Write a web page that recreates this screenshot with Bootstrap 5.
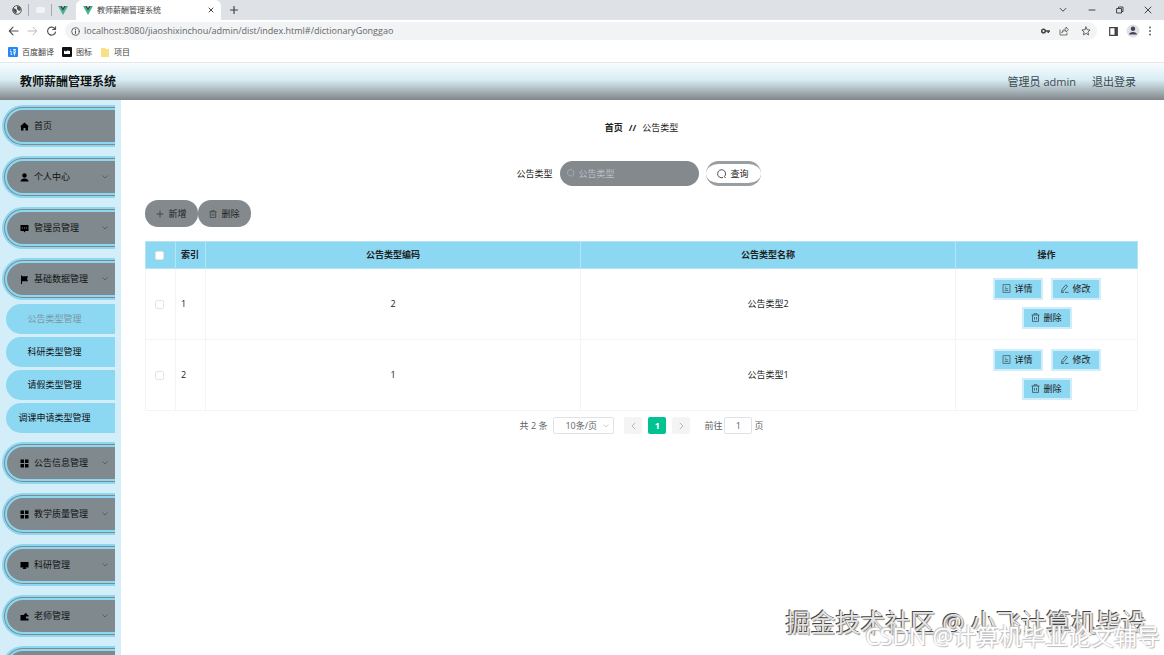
<!DOCTYPE html>
<html lang="zh-CN">
<head>
<meta charset="utf-8">
<meta name="viewport" content="width=device-width, initial-scale=1">
<title>教师薪酬管理系统</title>
<link href="https://cdn.jsdelivr.net/npm/bootstrap@5.3.0/dist/css/bootstrap.min.css" rel="stylesheet">
<style>
:root{--sky:#8cd7f2;--pale:#d4eef9;--steel:#84898d;--ui:"Open Sans","Noto Sans CJK SC",sans-serif}
body{font-family:var(--ui);font-size:9px;line-height:12px;color:#222;height:100vh;overflow:hidden;background:#fff}
button,input,select{font-family:inherit;font-size:inherit;line-height:12px;color:inherit}
svg{display:block;flex:none}
a{color:inherit;text-decoration:none}
.line-icon{fill:none;stroke:currentColor;stroke-linecap:round;stroke-linejoin:round}
.plain-btn{border:0;background:none;padding:0}

.tabstrip{height:20px;background:#dee1e6;color:#444}
.tab-group{width:76px;padding:0 8px 0 12px}
.tab-sep{width:1px;height:12px;background:#a5a9ae}
.active-tab{width:145px;height:20px;background:#fff;border-radius:6px 6px 0 0;padding:0 7px;font-size:8px}
.toolbar{height:22px;color:#555}
.omnibox{height:18px;border-radius:9px;background:#f1f3f4;padding:0 6px}
.omnibox input{border:0;background:none;padding:0;color:#666;outline:0;min-width:0}
.bookmarks{height:21px;border-bottom:1px solid #e4e6ea;font-size:8px;color:#444}

.app-header{height:37px;background:linear-gradient(#f8fdff 0%,#d8edf4 45%,#a9b6bb 75%,#808588 100%);padding:0 28px 0 20px}
.app-title{font-size:12px;line-height:16px;font-weight:700;color:#111}
.app-user{font-size:11px;line-height:16px;color:#3c4a50}

.sidebar{width:121px;background:var(--pale);padding:5px 6px 0 2px;flex:none;overflow:hidden}
.menu-list{gap:9px}
.menu-btn{height:42px;width:100%;background:#7f898e;border:5px double var(--sky);border-right:0;border-radius:21px 0 0 21px;padding:0 6px 0 13px;text-align:left;color:#111;gap:5px}
.menu-btn .ms-auto{color:#50565a}
.sub-list{margin:4px 0 0 4px;gap:3px}
.sub-btn{height:30px;background:var(--sky);border-radius:15px 0 0 15px;color:#111;padding-right:12px}
.sub-btn.current{color:#7a979f}

.content{padding:20px 26px 0 24px;min-width:0}
.crumbs{height:16px;gap:6px}
.search-row{margin-top:25px;gap:7px;padding-right:6px}
.search-box input{width:139px;height:25px;border:0;border-radius:13px;background:var(--steel);padding:0 12px 0 19px;color:#fff}
.search-box input::placeholder{color:#b7bfc5;opacity:1}
.search-box svg{position:absolute;left:7px;top:8px;color:#b7bfc5}
.query-btn{width:55px;height:25px;border-radius:13px;background:#fff;border:solid #999ea1;border-width:3px 0;gap:3px}
.tool-row{margin-top:14px}
.pill-btn{width:53px;height:27px;border:0;border-radius:13px;background:var(--steel);gap:4px;color:#222}
.pill-btn svg,.op-btn svg{opacity:.75}
.data-table{margin:14px 0 0;table-layout:fixed;width:100%;border-collapse:collapse;text-align:center}
.data-table th{background:var(--sky);height:27px;border:1px solid #b5e4f5;padding:0;font-weight:700;color:#222}
.data-table td{height:71px;border:1px solid #f3f4f6;padding:0}
.data-table th:nth-child(2),.data-table td:nth-child(2){text-align:left;padding-left:5px}
.col-narrow{width:30px}
.col-ops{width:182px}
.data-table .form-check-input{width:9px;height:9px;margin:0 2px 0 0;float:none;vertical-align:middle;border-color:#e3e5ea;border-radius:2px;background-color:#fff}
.ops{gap:7px 8px;padding:0 30px 2px}
.op-btn{width:50px;height:22px;background:var(--sky);border:2px solid #cfeefa;gap:3px;color:#222}
.pager{margin-top:6px;color:#606266;gap:6px}
.pager select{appearance:none;width:61px;height:17px;border:1px solid #dfe2e8;border-radius:2px;background:#fff;padding:0 12px 0 11px;color:#606266;line-height:12px}
.select-wrap svg{position:absolute;right:4px;top:6px;color:#c0c4cc}
.page-btn{width:18px;height:17px;border:0;background:#f4f4f5;border-radius:2px;color:#b5b9c0}
.page-btn.current{background:#00c292;color:#fff;font-weight:700}
.pager input{width:28px;height:17px;border:1px solid #dfe2e8;border-radius:2px;text-align:center;padding:0;margin:0 2px;color:#606266}

.marks{position:absolute;right:4px;bottom:6px;white-space:nowrap;text-align:right;pointer-events:none}
.mark-front{font-size:25px;line-height:30px;color:#e4e4e4;text-shadow:-1px -1px 0 #444,1px 1px 1px #888;padding-right:14px}
.mark-back{font-size:23px;line-height:26px;color:#fff;text-shadow:-1px -1px 1px #c4c4c4,1px 1px 1px #bbb;margin-top:-14px}
</style>
</head>
<body class="d-flex flex-column position-relative">
<svg width="0" height="0" class="position-absolute" aria-hidden="true">
  <symbol id="vue" viewBox="0 0 10 9"><path fill="#41b883" d="M0 0h2l3 5 3-5h2L5 9z"/><path fill="#35495e" d="M2 0h2l1 2 1-2h2L5 5z"/></symbol>
  <symbol id="down" viewBox="0 0 8 6"><path d="M1.500 1.500 4 4l2.500-2.500" fill="none" stroke="currentColor" stroke-width=".8"/></symbol>
  <symbol id="lens" viewBox="0 0 10 10"><path d="M7.300 7.700A4 4 0 1 0 6 8.500M7.300 7.700 8.600 9" fill="none" stroke="currentColor" stroke-width=".8"/></symbol>
  <symbol id="trash" viewBox="0 0 9 9"><path d="M.5 2h8M3 2V.7h3V2M1.500 2v6.400h6V2M3.500 4v2.500M5.500 4v2.500" fill="none" stroke="currentColor" stroke-width=".8"/></symbol>
  <symbol id="doc" viewBox="0 0 9 9"><path d="M1 .6h7v7.800H1zM2.800 3h1.500M2.800 4.800h3.400M2.800 6.500h3.400" fill="none" stroke="currentColor" stroke-width=".7"/></symbol>
  <symbol id="pen" viewBox="0 0 9 9"><path d="M1.500 7.500 2 5.400 5.800.8 7.500 2.200 3.700 6.800zM1 8.400h3M5 8.400h3.500" fill="none" stroke="currentColor" stroke-width=".8"/></symbol>
  <symbol id="grid" viewBox="0 0 9 9"><path d="M.5.5h3.500V4H.5zM5 .5h3.500V4H5zM.5 5h3.500v3.500H.5zM5 5h3.500v3.500H5z"/></symbol>
</svg>

<div class="tabstrip d-flex align-items-center flex-shrink-0">
  <div class="tab-group d-flex align-items-center justify-content-between">
    <svg width="10" height="10" viewBox="0 0 10 10"><circle cx="5" cy="5" r="4.300" fill="#eee" stroke="#555"/><path fill="#555" d="M1 3l3 1 1 2-1 3-3-3zM5 1l3 1 1 3-2 1-2-2z"/></svg>
    <span class="tab-sep"></span><svg width="9" height="7"><rect width="9" height="6" rx="2" fill="#f3f4f6"/></svg><span class="tab-sep"></span>
    <svg width="10" height="9"><use href="#vue"/></svg>
  </div>
  <div class="active-tab d-flex align-items-center">
    <svg width="10" height="9"><use href="#vue"/></svg><span class="ms-1">教师薪酬管理系统</span>
    <button class="plain-btn ms-auto" aria-label="关闭标签页"><svg class="line-icon" width="6" height="6" viewBox="0 0 6 6"><path d="M1 1l4 4M5 1 1 5"/></svg></button>
  </div>
  <button class="plain-btn ms-2" aria-label="新标签页"><svg class="line-icon" width="10" height="8" viewBox="0 0 10 8"><path d="M5 .5v7M1.500 4h7" stroke-width="1.200"/></svg></button>
  <div class="d-flex align-items-center ms-auto pe-2 me-1 gap-3">
    <button class="plain-btn me-1" aria-label="搜索标签页"><svg width="10" height="8"><use href="#down"/></svg></button>
    <button class="plain-btn" aria-label="最小化"><svg class="line-icon" width="8" height="8" viewBox="0 0 8 8"><path d="M1 4h6"/></svg></button>
    <button class="plain-btn mx-1" aria-label="还原"><svg class="line-icon" width="8" height="8" viewBox="0 0 8 8"><path d="M1 2.500h4.500V7H1zM2.500 2V1H7v4.500H6"/></svg></button>
    <button class="plain-btn" aria-label="关闭"><svg class="line-icon" width="8" height="8" viewBox="0 0 8 8"><path d="M1 1l6 6M7 1 1 7"/></svg></button>
  </div>
</div>

<div class="toolbar d-flex align-items-center flex-shrink-0 ps-2 pe-2">
  <button class="plain-btn" aria-label="后退"><svg class="line-icon" width="11" height="10" viewBox="0 0 11 10"><path d="M10 5H1.500M5 1.200 1.300 5 5 8.800" stroke-width="1.200"/></svg></button>
  <button class="plain-btn ms-2" aria-label="前进"><svg class="line-icon" width="11" height="10" viewBox="0 0 11 10"><path d="M1 5h8.500M6 1.200 9.700 5 6 8.800" stroke="#bbb"/></svg></button>
  <button class="plain-btn ms-2" aria-label="刷新"><svg class="line-icon" width="11" height="10" viewBox="0 0 11 10"><path d="M9 3A4 4 0 1 0 9.500 6M9.500.8v2.700H6.700" stroke-width="1.200"/></svg></button>
  <div class="omnibox d-flex align-items-center flex-grow-1 ms-2 me-1">
    <svg class="line-icon" width="9" height="9" viewBox="0 0 9 9"><circle cx="4.500" cy="4.500" r="3.800" stroke-width=".9"/><path d="M4.500 4v2.500M4.500 2.400v.2"/></svg>
    <input class="flex-grow-1 ms-1" type="text" aria-label="地址" value="localhost:8080/jiaoshixinchou/admin/dist/index.html#/dictionaryGonggao">
    <div class="d-flex gap-2">
      <svg width="11" height="10" viewBox="0 0 11 10"><circle cx="3.500" cy="5" r="1.800" fill="none" stroke="#444" stroke-width="1.500"/><path d="M5 4.300h5v1.500H9V7H7.500V5.800H5z" fill="#444"/></svg>
      <svg class="line-icon" width="10" height="10" viewBox="0 0 10 10"><path d="M1 4v5h7V7M3 6.500C3.500 4 5 3 7 3V1l2.500 2.700L7 6V4.500C5 4.500 4 5 3 6.500z" stroke-width=".8"/></svg>
      <svg class="line-icon ms-1" width="10" height="10" viewBox="0 0 10 10"><path d="M5 1l1.200 2.700 2.900.3-2.200 2 .7 2.900L5 7.400 2.400 8.900 3.100 6 .9 4l2.900-.3z" stroke-width=".9"/></svg>
    </div>
  </div>
  <svg class="ms-2" width="9" height="9" viewBox="0 0 9 9"><path d="M.7.7h7.600v7.600H.7z" fill="none" stroke="#444" stroke-width="1.200"/><path fill="#444" d="M5.500 1H8v7H5.500z"/></svg>
  <svg class="ms-2" width="14" height="14" viewBox="0 0 14 14"><circle cx="7" cy="7" r="6.500" fill="#dde1ea"/><circle cx="7" cy="4.800" r="2.200" fill="#445"/><path d="M3 10.500C3 7 11 7 11 10.500z" fill="#445"/></svg>
  <svg class="ms-2 me-1" width="4" height="10" viewBox="0 0 4 10" fill="#555"><circle cx="2" cy="1.500" r=".9"/><circle cx="2" cy="5" r=".9"/><circle cx="2" cy="8.500" r=".9"/></svg>
</div>

<nav class="bookmarks d-flex align-items-center flex-shrink-0 ps-2 gap-2" aria-label="书签">
  <a href="#" class="d-flex align-items-center gap-1"><svg width="10" height="10" viewBox="0 0 10 10"><rect width="10" height="10" rx="1" fill="#2688f0"/><path d="M2 2.500l1 .8M2 4.500h1.200V8l1-1M5 2.500h3L5.200 5M5.500 3 8 5M5 6h3M6.500 5v3.500" fill="none" stroke="#fff" stroke-width=".8"/></svg>百度翻译</a>
  <a href="#" class="d-flex align-items-center gap-1"><svg width="10" height="10" viewBox="0 0 10 10"><rect width="10" height="10" rx="1" fill="#111"/><path d="M2 7V3.500l2 1 1-1 3 .5v3z" fill="#fff"/></svg>图标</a>
  <a href="#" class="d-flex align-items-center gap-1"><svg width="10" height="10" viewBox="0 0 10 10"><path d="M1 1h4l1 1h3v8H1z" fill="#fbdf86"/></svg>项目</a>
</nav>

<header class="app-header d-flex align-items-center flex-shrink-0">
  <h1 class="app-title mb-0">教师薪酬管理系统</h1>
  <span class="app-user ms-auto">管理员 admin</span>
  <a href="#" class="app-user ms-3">退出登录</a>
</header>

<div class="d-flex flex-grow-1 overflow-hidden">
  <aside class="sidebar">
    <ul class="menu-list list-unstyled d-flex flex-column mb-0">
      <li><button class="menu-btn d-flex align-items-center"><svg width="9" height="9" viewBox="0 0 9 9"><path d="M4.500.5 0 4.500h1v4h2.500V6h2v2.500H8v-4h1z"/></svg>首页</button></li>
      <li><button class="menu-btn d-flex align-items-center"><svg width="9" height="9" viewBox="0 0 9 9"><circle cx="4.500" cy="2.500" r="2.200"/><path d="M.5 8.500C.5 4.500 8.500 4.500 8.500 8.500z"/></svg>个人中心<svg class="ms-auto" width="8" height="6"><use href="#down"/></svg></button></li>
      <li><button class="menu-btn d-flex align-items-center"><svg width="9" height="9" viewBox="0 0 9 9"><path d="M.5 1h8v6H5.500l-1 1.500-1-1.500h-3z"/><path d="M2 4h1M4 4h1M6 4h1" stroke="#84898d"/></svg>管理员管理<svg class="ms-auto" width="8" height="6"><use href="#down"/></svg></button></li>
      <li><button class="menu-btn d-flex align-items-center" aria-expanded="true"><svg width="9" height="9" viewBox="0 0 9 9"><path d="M1 .5h1v.7h6L7 3.700l1 2.500H2V9H1z"/></svg>基础数据管理<svg class="ms-auto" width="8" height="6"><use href="#down"/></svg></button>
        <div class="sub-list d-flex flex-column">
          <a href="#" class="sub-btn current d-flex align-items-center justify-content-center">公告类型管理</a>
          <a href="#" class="sub-btn d-flex align-items-center justify-content-center">科研类型管理</a>
          <a href="#" class="sub-btn d-flex align-items-center justify-content-center">请假类型管理</a>
          <a href="#" class="sub-btn d-flex align-items-center justify-content-center">调课申请类型管理</a>
        </div></li>
      <li><button class="menu-btn d-flex align-items-center"><svg width="9" height="9"><use href="#grid"/></svg>公告信息管理<svg class="ms-auto" width="8" height="6"><use href="#down"/></svg></button></li>
      <li><button class="menu-btn d-flex align-items-center"><svg width="9" height="9"><use href="#grid"/></svg>教学质量管理<svg class="ms-auto" width="8" height="6"><use href="#down"/></svg></button></li>
      <li><button class="menu-btn d-flex align-items-center"><svg width="9" height="9" viewBox="0 0 9 9"><path d="M.5 1h8v5.500H5.500L6.500 8h-4l1-1.500h-3z"/></svg>科研管理<svg class="ms-auto" width="8" height="6"><use href="#down"/></svg></button></li>
      <li><button class="menu-btn d-flex align-items-center"><svg width="9" height="9" viewBox="0 0 9 9"><path d="M.5 3h3L6 .8 7.500 3h1v1.500H6v2h2.500v2h-8z"/></svg>老师管理<svg class="ms-auto" width="8" height="6"><use href="#down"/></svg></button></li>
      <li><button class="menu-btn d-flex align-items-center" aria-label="更多"></button></li>
    </ul>
  </aside>

  <main class="content flex-grow-1">
    <nav class="crumbs d-flex align-items-center justify-content-center" aria-label="位置"><a href="#" class="fw-bold">首页</a><b>//</b><span>公告类型</span></nav>
    <form class="search-row d-flex align-items-center justify-content-center" onsubmit="return false">
      <label for="kind">公告类型</label>
      <div class="search-box position-relative"><input id="kind" type="text" placeholder="公告类型"><svg width="8" height="8"><use href="#lens"/></svg></div>
      <button class="query-btn d-flex align-items-center justify-content-center"><svg width="10" height="10"><use href="#lens"/></svg>查询</button>
    </form>
    <div class="tool-row d-flex">
      <button class="pill-btn d-flex align-items-center justify-content-center"><svg class="line-icon" width="8" height="8" viewBox="0 0 8 8"><path d="M4 1v6M1 4h6" stroke-width=".8"/></svg>新增</button>
      <button class="pill-btn d-flex align-items-center justify-content-center"><svg width="8" height="8"><use href="#trash"/></svg>删除</button>
    </div>
    <table class="data-table">
      <colgroup><col class="col-narrow"><col class="col-narrow"><col><col><col class="col-ops"></colgroup>
      <thead><tr><th><input class="form-check-input" type="checkbox" aria-label="全选"></th><th>索引</th><th>公告类型编码</th><th>公告类型名称</th><th>操作</th></tr></thead>
      <tbody>
        <tr><td><input class="form-check-input" type="checkbox" aria-label="选择第1行"></td><td>1</td><td>2</td><td>公告类型2</td>
          <td><div class="ops d-flex flex-wrap justify-content-center">
            <button class="op-btn d-flex align-items-center justify-content-center"><svg width="9" height="9"><use href="#doc"/></svg>详情</button>
            <button class="op-btn d-flex align-items-center justify-content-center"><svg width="9" height="9"><use href="#pen"/></svg>修改</button>
            <button class="op-btn d-flex align-items-center justify-content-center"><svg width="9" height="9"><use href="#trash"/></svg>删除</button></div></td></tr>
        <tr><td><input class="form-check-input" type="checkbox" aria-label="选择第2行"></td><td>2</td><td>1</td><td>公告类型1</td>
          <td><div class="ops d-flex flex-wrap justify-content-center">
            <button class="op-btn d-flex align-items-center justify-content-center"><svg width="9" height="9"><use href="#doc"/></svg>详情</button>
            <button class="op-btn d-flex align-items-center justify-content-center"><svg width="9" height="9"><use href="#pen"/></svg>修改</button>
            <button class="op-btn d-flex align-items-center justify-content-center"><svg width="9" height="9"><use href="#trash"/></svg>删除</button></div></td></tr>
      </tbody>
    </table>
    <div class="pager d-flex align-items-center justify-content-center">
      <span>共 2 条</span>
      <div class="select-wrap position-relative"><select aria-label="每页条数"><option>10条/页</option></select><svg width="8" height="6"><use href="#down"/></svg></div>
      <button class="page-btn d-flex align-items-center justify-content-center ms-1" aria-label="上一页"><svg class="line-icon" width="5" height="8" viewBox="0 0 5 8"><path d="M4 1 1 4l3 3"/></svg></button>
      <button class="page-btn current">1</button>
      <button class="page-btn d-flex align-items-center justify-content-center" aria-label="下一页"><svg class="line-icon" width="5" height="8" viewBox="0 0 5 8"><path d="M1 1l3 3-3 3"/></svg></button>
      <label class="d-flex align-items-center ms-2">前往<input type="text" value="1">页</label>
    </div>
  </main>
</div>

<div class="marks">
  <div class="mark-back-wrap d-flex flex-column">
    <div class="mark-front">掘金技术社区 @ 小飞计算机毕设</div>
    <div class="mark-back">CSDN @计算机毕业论文辅导</div>
  </div>
</div>
<script src="https://cdn.jsdelivr.net/npm/bootstrap@5.3.0/dist/js/bootstrap.bundle.min.js"></script>
</body>
</html>
